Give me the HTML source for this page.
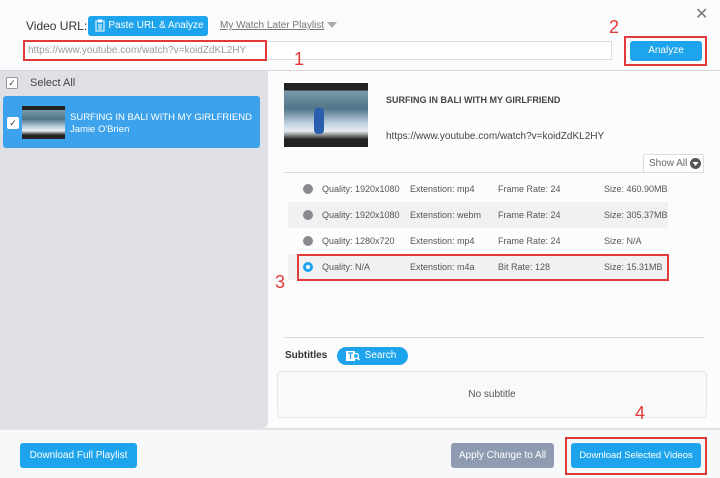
<!DOCTYPE html>
<html><head><meta charset="utf-8"><style>
*{margin:0;padding:0;box-sizing:border-box;white-space:nowrap}
html,body{width:720px;height:478px;overflow:hidden}
body{position:relative;background:#fafbfc;font-family:"Liberation Sans",sans-serif;font-size:10px;color:#444}
.a{position:absolute}
.btn{position:absolute;background:#1ea4ec;color:#fff;border-radius:3px;text-align:center}
.red{position:absolute;border:2px solid #e03a3a}
.num{position:absolute;color:#e03a3a;font-size:18px}
.row{position:absolute;left:288px;width:380px;height:26px;font-size:9px;color:#555}
.row span{position:absolute;top:8px}
.dot{position:absolute;left:15px;top:8px;width:10px;height:10px;border-radius:50%;background:#8a8a8e}
.thumb{background:linear-gradient(180deg,#222 0 12%,#7a9aa8 12%,#4f7588 40%,#bcd 62%,#e8eef2 75%,#222 88%)}
</style></head><body>
<div class="a" style="left:695px;top:4px;font-size:16px;color:#777">✕</div>
<div class="a" style="left:26px;top:19px;font-size:12px;color:#333">Video URL:</div>
<div class="btn" style="left:88px;top:16px;width:120px;height:20px;line-height:20px;font-size:10px;padding-left:16px">Paste URL &amp; Analyze</div>
<svg class="a" style="left:95px;top:19px" width="10" height="13" viewBox="0 0 10 13"><rect x="1" y="2" width="8" height="10" fill="none" stroke="#fff"/><rect x="3" y="0.5" width="4" height="3" fill="#fff"/><path d="M3 6h4M3 8h4M3 10h4" stroke="#fff"/></svg>
<div class="a" style="left:220px;top:20px;font-size:10px;color:#777;text-decoration:underline">My Watch Later Playlist</div>
<svg class="a" style="left:327px;top:22px" width="10" height="7"><path d="M0 0h10L5 6z" fill="#aaa"/></svg>
<div class="a" style="left:24px;top:41px;width:588px;height:19px;border:1px solid #ddd;background:#fff"></div>
<div class="a" style="left:28px;top:45px;font-size:10px;color:#999">https://www.youtube.com/watch?v=koidZdKL2HY</div>
<div class="red" style="left:23px;top:40px;width:244px;height:21px"></div>
<div class="num" style="left:294px;top:49px">1</div>
<div class="num" style="left:609px;top:17px">2</div>
<div class="btn" style="left:630px;top:41px;width:72px;height:20px;line-height:20px">Analyze</div>
<div class="red" style="left:624px;top:36px;width:83px;height:30px"></div>
<div class="a" style="left:0;top:70px;width:720px;height:1px;background:#d8d8dc"></div>
<div class="a" style="left:0;top:71px;width:268px;height:357px;background:#dfe0e4;border-radius:0 0 6px 0"></div>
<div class="a" style="left:6px;top:77px;width:12px;height:12px;border:1px solid #999;background:#fff;border-radius:2px;font-size:9px;line-height:10px;text-align:center;color:#444">✓</div>
<div class="a" style="left:30px;top:77px;font-size:11px;color:#444">Select All</div>
<div class="a" style="left:3px;top:96px;width:257px;height:52px;background:#3da2ec;border-radius:3px"></div>
<div class="a" style="left:7px;top:117px;width:12px;height:12px;background:#fff;border-radius:2px;font-size:9px;line-height:12px;text-align:center;color:#333">✓</div>
<div class="a thumb" style="left:22px;top:106px;width:43px;height:33px"></div>
<div class="a" style="left:70px;top:112px;font-size:9.5px;color:#fff;line-height:12px">SURFING IN BALI WITH MY GIRLFRIEND<br>Jamie O'Brien</div>
<div class="a" style="left:270px;top:72px;width:450px;height:356px;background:#fcfcfd;border-radius:6px 0 0 0"></div>
<div class="a thumb" style="left:284px;top:83px;width:84px;height:64px"></div>
<div class="a" style="left:314px;top:108px;width:10px;height:26px;background:#2a5fb0;border-radius:4px"></div>
<div class="a" style="left:386px;top:95px;font-size:9px;font-weight:bold;color:#444">SURFING IN BALI WITH MY GIRLFRIEND</div>
<div class="a" style="left:386px;top:131px;font-size:10px;color:#444">https://www.youtube.com/watch?v=koidZdKL2HY</div>
<div class="a" style="left:643px;top:154px;width:61px;height:19px;border:1px solid #ddd;background:#fff;border-radius:2px;font-size:10px;color:#666;padding:3px 0 0 5px">Show All</div>
<svg class="a" style="left:690px;top:158px" width="11" height="11"><circle cx="5.5" cy="5.5" r="5.5" fill="#555"/><path d="M2.5 4h6L5.5 8z" fill="#fff"/></svg>
<div class="a" style="left:284px;top:172px;width:420px;height:1px;background:#ddd"></div>
<div class="row" style="top:176px"><i class="dot"></i><span style="left:34px">Quality: 1920x1080</span><span style="left:122px">Extenstion: mp4</span><span style="left:210px">Frame Rate: 24</span><span style="left:316px">Size: 460.90MB</span></div>
<div class="row" style="top:202px;background:#f1f1f3"><i class="dot"></i><span style="left:34px">Quality: 1920x1080</span><span style="left:122px">Extenstion: webm</span><span style="left:210px">Frame Rate: 24</span><span style="left:316px">Size: 305.37MB</span></div>
<div class="row" style="top:228px"><i class="dot"></i><span style="left:34px">Quality: 1280x720</span><span style="left:122px">Extenstion: mp4</span><span style="left:210px">Frame Rate: 24</span><span style="left:316px">Size: N/A</span></div>
<div class="row" style="top:254px;background:#f1f1f3"><i class="dot" style="background:#fff;border:3px solid #1ea4ec"></i><span style="left:34px">Quality: N/A</span><span style="left:122px">Extenstion: m4a</span><span style="left:210px">Bit Rate: 128</span><span style="left:316px">Size: 15.31MB</span></div>
<div class="red" style="left:297px;top:254px;width:372px;height:27px"></div>
<div class="num" style="left:275px;top:272px">3</div>
<div class="a" style="left:284px;top:337px;width:420px;height:1px;background:#ddd"></div>
<div class="a" style="left:285px;top:350px;font-size:10px;font-weight:bold;color:#333">Subtitles</div>
<div class="btn" style="left:337px;top:347px;width:71px;height:18px;line-height:18px;border-radius:9px;padding-left:16px;font-size:10px">Search</div>
<svg class="a" style="left:346px;top:350px" width="14" height="12"><rect x="0" y="1" width="9" height="10" fill="#fff"/><path d="M2 3h5M4.5 3v6" stroke="#1ea4ec" stroke-width="1.3"/><circle cx="10" cy="6" r="2.5" fill="#1ea4ec" stroke="#fff" stroke-width="1.3"/><path d="M11.5 8l2 2" stroke="#fff" stroke-width="1.5"/></svg>
<div class="a" style="left:277px;top:371px;width:430px;height:47px;border:1px solid #e6e6e8;border-radius:4px;background:#f9f9fa;text-align:center;line-height:45px;font-size:10px;color:#555">No subtitle</div>
<div class="a" style="left:0;top:428px;width:720px;height:2px;background:#e2e2e5"></div>
<div class="a" style="left:0;top:430px;width:720px;height:48px;background:#f7f8fa"></div>
<div class="btn" style="left:20px;top:443px;width:117px;height:25px;line-height:25px;font-size:10px">Download Full Playlist</div>
<div class="btn" style="left:451px;top:443px;width:103px;height:25px;line-height:25px;background:#8e9bb0;font-size:10px">Apply Change to All</div>
<div class="num" style="left:635px;top:403px">4</div>
<div class="btn" style="left:571px;top:443px;width:130px;height:25px;line-height:25px;font-size:9.5px">Download Selected Videos</div>
<div class="red" style="left:565px;top:437px;width:142px;height:38px"></div>
</body></html>
